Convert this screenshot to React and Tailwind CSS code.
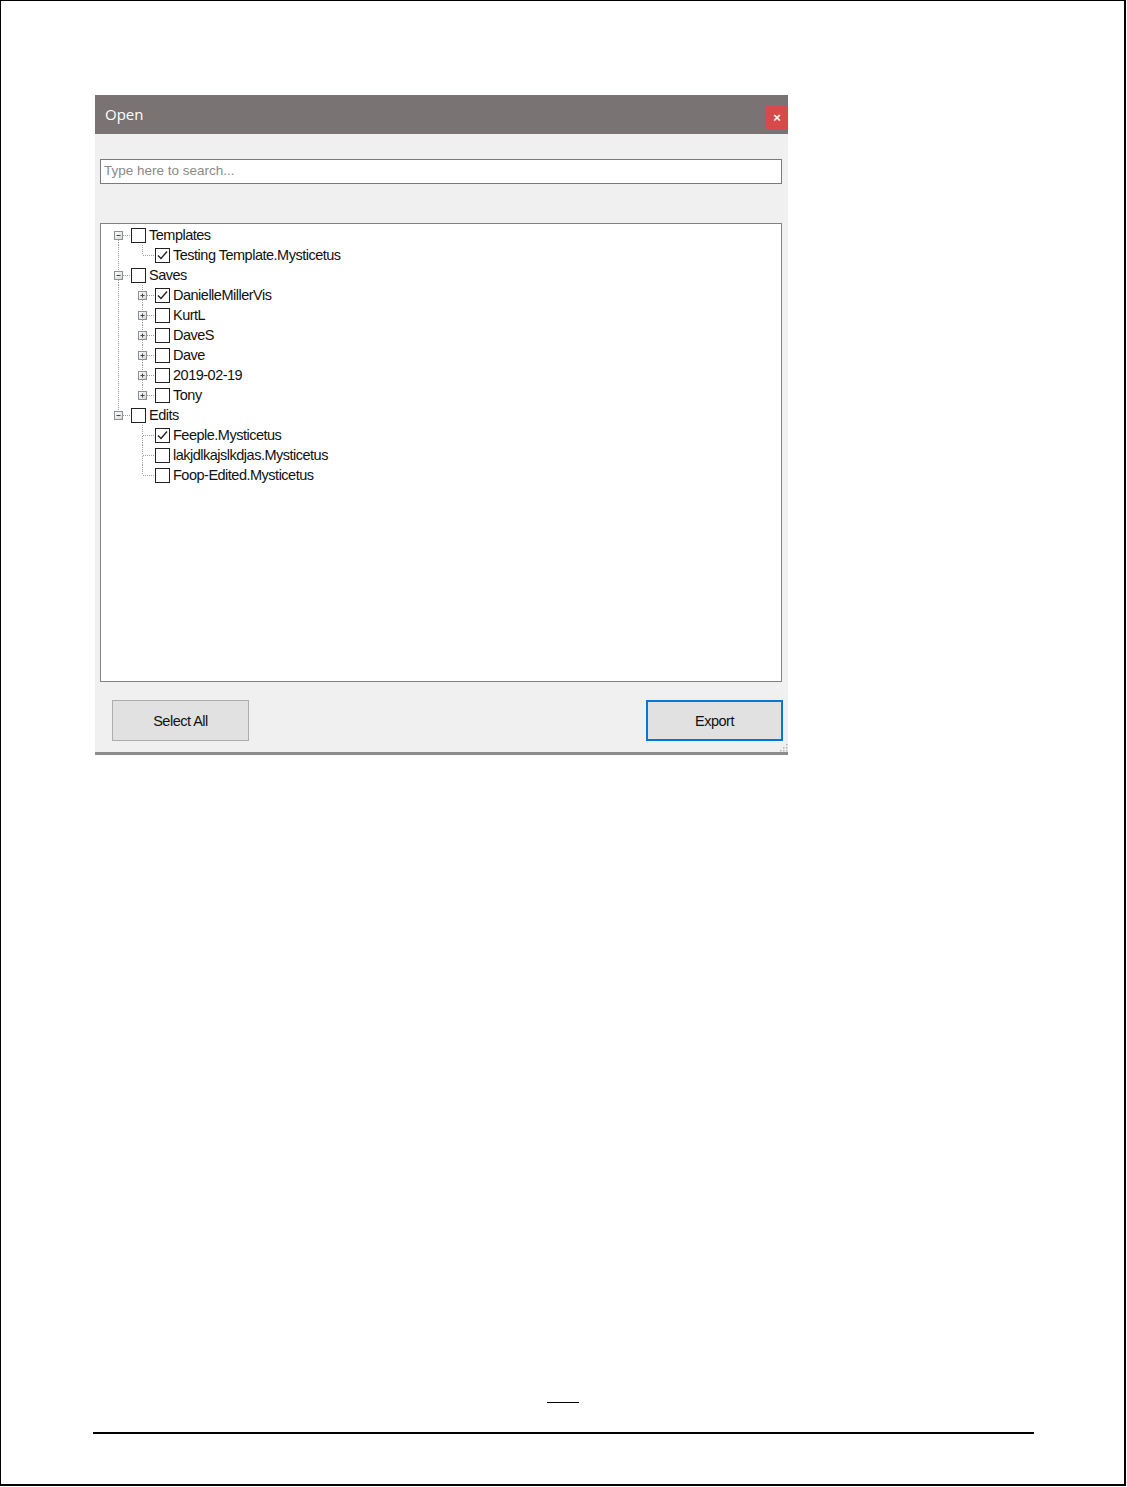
import React from "react";

const tree = [
  {
    label: "Templates",
    children: [{ label: "Testing Template.Mysticetus", checked: true }],
  },
  {
    label: "Saves",
    children: [
      { label: "DanielleMillerVis", checked: true, closed: true },
      { label: "KurtL", closed: true },
      { label: "DaveS", closed: true },
      { label: "Dave", closed: true },
      { label: "2019-02-19", closed: true },
      { label: "Tony", closed: true },
    ],
  },
  {
    label: "Edits",
    children: [
      { label: "Feeple.Mysticetus", checked: true },
      { label: "lakjdlkajslkdjas.Mysticetus" },
      { label: "Foop-Edited.Mysticetus" },
    ],
  },
];

// flatten the tree into rows with the guide lines each row needs
const flatten = (nodes, level = 0, guides = [], out = []) => {
  nodes.forEach((node, i) => {
    const last = i === nodes.length - 1;
    out.push({
      ...node,
      level,
      guides,
      up: level > 0 || i > 0,
      down: !last,
      expander: node.children ? "minus" : node.closed ? "plus" : null,
    });
    if (node.children) flatten(node.children, level + 1, [...guides, !last], out);
  });
  return out;
};

const rows = flatten(tree);

const Guide = ({ line }) => (
  <svg width="24" height="20" className="shrink-0">
    {line && (
      <line x1="12.5" y1="0" x2="12.5" y2="20" stroke="#a0a0a0" strokeDasharray="1 1" />
    )}
  </svg>
);

const Connector = ({ up, down, expander }) => (
  <svg width="24" height="20" className="shrink-0">
    {up && <line x1="12.5" y1="0" x2="12.5" y2="10" stroke="#a0a0a0" strokeDasharray="1 1" />}
    {down && <line x1="12.5" y1="11" x2="12.5" y2="20" stroke="#a0a0a0" strokeDasharray="1 1" />}
    <line x1="13" y1="10.5" x2="24" y2="10.5" stroke="#a0a0a0" strokeDasharray="1 1" />
    {expander && (
      <g>
        <defs>
          <linearGradient id="exp" x1="0" y1="0" x2="1" y2="1">
            <stop offset="0" stopColor="#ffffff" />
            <stop offset="1" stopColor="#d6d6d6" />
          </linearGradient>
        </defs>
        <rect x="8.5" y="6.5" width="8" height="8" fill="url(#exp)" stroke="#8e8f8f" />
        <line x1="10.5" y1="10.5" x2="14.5" y2="10.5" stroke="#3d4b5f" />
        {expander === "plus" && (
          <line x1="12.5" y1="8.5" x2="12.5" y2="12.5" stroke="#3d4b5f" />
        )}
      </g>
    )}
  </svg>
);

const Checkbox = ({ checked }) => (
  <div className="w-[15px] h-[15px] ml-[1px] shrink-0 border border-[#222] bg-white flex items-center justify-center">
    {checked && (
      <svg width="13" height="13" viewBox="0 0 13 13">
        <polyline points="2,6.5 5,9.5 11,2.5" fill="none" stroke="#222" strokeWidth="1.4" />
      </svg>
    )}
  </div>
);

const TreeRow = ({ row }) => (
  <div className="flex items-center h-5">
    {row.guides.map((g, i) => (
      <Guide key={i} line={g} />
    ))}
    <Connector up={row.up} down={row.down} expander={row.expander} />
    <Checkbox checked={row.checked} />
    <span className="ml-[3px] text-[14.5px] tracking-[-0.5px] text-[#111] leading-5 whitespace-nowrap">
      {row.label}
    </span>
  </div>
);

export default function App() {
  return (
    <div className="w-[1127px] h-[1487px] bg-white" style={{ fontFamily: '"Liberation Sans", Arial, sans-serif' }}>
      <div className="w-[1126px] h-[1486px] border-l border-t border-r-2 border-b-2 border-black flex flex-col">
        <div className="ml-[94px] mt-[94px] w-[693px] h-[660px] bg-[#f0f0f0] flex flex-col border-b-[3px] border-[#8c8c8c]">
          {/* title bar */}
          <div className="h-[39px] bg-[#7a7373] flex items-start justify-between shrink-0">
            <span className="ml-[10px] mt-[9px] text-white text-[15px] leading-5" style={{ fontFamily: '"Open Sans", sans-serif' }}>
              Open
            </span>
            <div className="mt-[11px] w-[22px] h-[23px] bg-[#d64a4a] text-white flex items-center justify-center text-[13px] font-bold leading-none">
              ×
            </div>
          </div>

          {/* search */}
          <div className="mt-[25px] ml-[5px] w-[682px] h-[25px] border border-[#7a7a7a] bg-white flex items-center px-[3px]">
            <span className="text-[13.5px] text-[#8a8a8a]">Type here to search...</span>
          </div>

          {/* tree */}
          <div className="mt-[39px] ml-[5px] w-[682px] h-[459px] border border-[#828282] bg-white pt-[1px] pl-[5px]">
            {rows.map((row, i) => (
              <TreeRow key={i} row={row} />
            ))}
          </div>

          {/* buttons */}
          <div className="mt-[18px] flex justify-between pl-[17px] pr-[5px]">
            <button className="w-[137px] h-[41px] bg-[#e1e1e1] border border-[#adadad] text-[14.5px] tracking-[-0.5px] text-[#111] pt-[2px]">
              Select All
            </button>
            <div className="relative">
              <button className="w-[137px] h-[41px] bg-[#e1e1e1] border-2 border-[#0078d7] text-[14.5px] tracking-[-0.5px] text-[#111] pt-[2px]">
                Export
              </button>
              <svg width="8" height="8" className="absolute -right-[5px] -bottom-[11px]">
                {[[6, 0], [6, 3], [3, 3], [6, 6], [3, 6], [0, 6]].map(([x, y], i) => (
                  <rect key={i} x={x} y={y} width="1.5" height="1.5" fill="#b5b5b5" />
                ))}
              </svg>
            </div>
          </div>
        </div>

        {/* page footer lines */}
        <div className="ml-[546px] mt-[647px] w-[32px] h-px bg-black" />
        <div className="ml-[92px] mt-[29px] w-[941px] h-[2px] bg-black" />
      </div>
    </div>
  );
}
